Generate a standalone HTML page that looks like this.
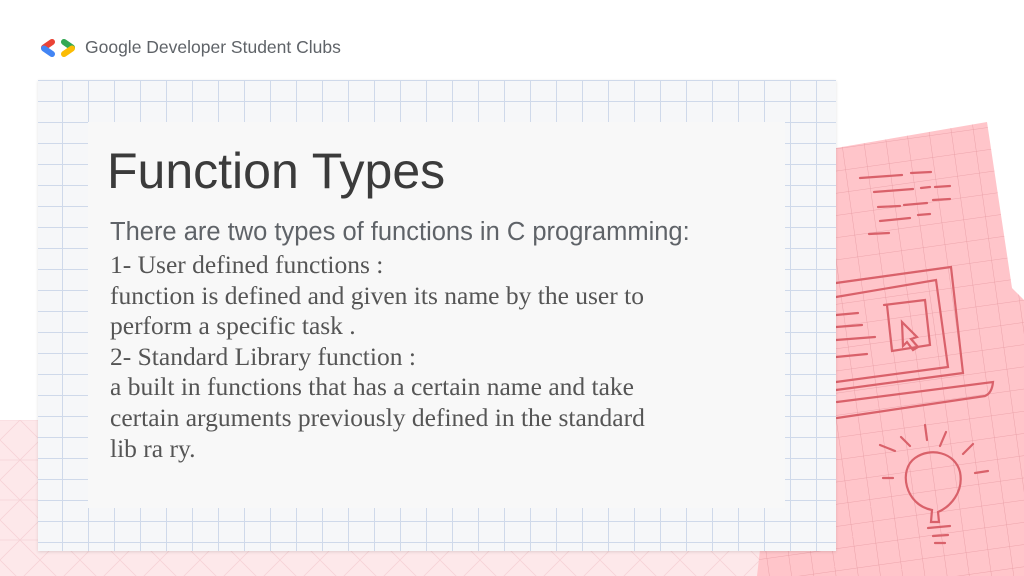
<!DOCTYPE html>
<html><head><meta charset="utf-8"><style>
html,body{margin:0;padding:0}
body{width:1024px;height:576px;position:relative;overflow:hidden;background:#fff;font-family:"Liberation Sans",sans-serif}
.abs{position:absolute}
#card{left:38px;top:80px;width:798px;height:471px;background-color:#f6f7f9;
background-image:linear-gradient(to right,#cfd9ea 1px,transparent 1px),linear-gradient(to bottom,#cfd9ea 1px,transparent 1px);
background-size:26px 21px;background-position:24px 21px;box-shadow:0 1px 3px rgba(0,0,0,0.12)}
#inner{left:88px;top:122px;width:697px;height:386px;background:#f8f8f8}
#title{left:107px;top:143px;font-size:50px;line-height:56px;color:#3b3b3b;white-space:nowrap}
#sub{left:110px;top:219px;font-size:25.5px;line-height:26px;color:#5f6368;white-space:nowrap}
#body{left:110px;top:250px;font-family:"Liberation Serif",serif;font-size:25.5px;line-height:30.6px;color:#555;white-space:nowrap}
#logo{left:85px;top:37px;font-size:17.5px;color:#5f6368;white-space:nowrap}
</style></head><body>
<svg class="abs" style="left:0;top:0" width="1024" height="576">
<defs>
<pattern id="pg" width="22" height="22" patternUnits="userSpaceOnUse" patternTransform="rotate(-8)">
<path d="M22 0V22M0 22H22" stroke="#e79aa2" stroke-width="0.8" fill="none"/></pattern>
<pattern id="tri" width="40" height="40" patternUnits="userSpaceOnUse">
<path d="M0 0L40 40M40 0L0 40M0 20H40" stroke="#f6d3d7" stroke-width="0.8" fill="none"/></pattern>
</defs>
<rect x="0" y="420" width="780" height="156" fill="#fde8ea"/>
<rect x="0" y="420" width="780" height="156" fill="url(#tri)"/>
<polygon points="836,148 987,122 1012,288 1024,300 1024,576 757,576 760,550 836,550" fill="#ffc5ca"/>
<polygon points="836,148 987,122 1012,288 1024,300 1024,576 757,576 760,550 836,550" fill="url(#pg)"/>
<g stroke="#d9616a" stroke-width="2.2" fill="none" stroke-linecap="round">
<path d="M860 178L902 175M911 173L931 172M874 192L913 189M921 188L930 187M935 187L950 186M878 207L900 206M904 205L927 203M933 200L950 199M880 221L910 218M918 215L930 214M869 234L889 233"/>
<path d="M836 283L951 267L963 373L836 390"/>
<path d="M836 297L936 280L948 367L836 382"/>
<path d="M836 315L858 313M836 327L862 325M836 340L875 337M836 357L867 354"/>
<path d="M884 305L925 300L930 345L892 351L887 305"/>
<path d="M902 322L917 337L911 339L918 347L913 350L907 342L903 346Z"/>
<path d="M837 402L993 382Q992 393 985 396L837 418"/>
<path d="M932 510C905 505 898 470 915 458C930 447 955 452 960 472C964 492 950 507 938 512L939 522L931 522Z"/>
<path d="M928 528L950 526M933 536L948 535M935 543L945 543"/>
<path d="M925 425L927 440M901 437L910 446M880 445L895 451M883 478L893 478M946 432L940 446M973 444L963 454M975 473L988 471"/>
</g>
</svg>
<svg class="abs" style="left:40px;top:38px" width="40" height="20" viewBox="0 0 40 20">
<path d="M12 4L4 9.5" stroke="#ea4335" stroke-width="6" stroke-linecap="round"/>
<path d="M4 10.5L12 16" stroke="#4285f4" stroke-width="6" stroke-linecap="round"/>
<path d="M24 4L32 9.5" stroke="#34a853" stroke-width="6" stroke-linecap="round"/>
<path d="M32 10.5L24 16" stroke="#fbbc04" stroke-width="6" stroke-linecap="round"/>
</svg>
<div id="logo" class="abs">Google Developer Student Clubs</div>
<div id="card" class="abs"></div>
<div id="inner" class="abs"></div>
<div id="title" class="abs">Function Types</div>
<div id="sub" class="abs">There are two types of functions in C programming:</div>
<div id="body" class="abs">1- User defined functions :<br>function is defined and given its name by the user to<br>perform a specific task .<br>2- Standard Library function :<br>a built in functions that has a certain name and take<br>certain arguments previously defined in the standard<br>lib ra ry.</div>
</body></html>
